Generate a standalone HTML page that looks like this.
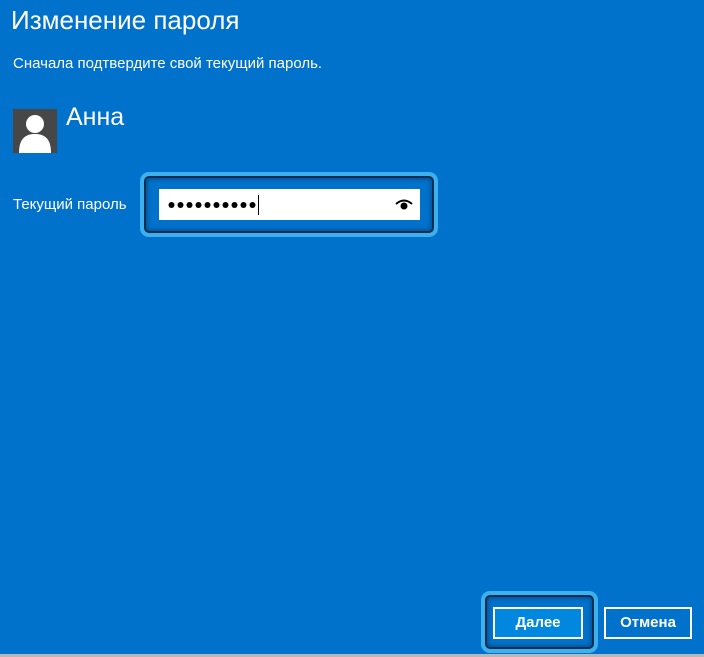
<!DOCTYPE html>
<html><head><meta charset="utf-8"><style>
body{margin:0;width:704px;height:657px;background:#0072cc;font-family:"Segoe UI","Liberation Sans","DejaVu Sans",sans-serif;color:#fff;position:relative;overflow:hidden}
.a{position:absolute}
.ring{position:absolute;border:4px solid #3fb0ee;border-radius:9px;box-shadow:inset 0 0 0 2px #0a2f52,inset 0 0 4px 3px #0a4a85}
.btn{position:absolute;border:2px solid #fff;font-weight:bold;font-size:15px;text-align:center;line-height:28px;box-sizing:border-box}
</style></head><body>
<div class="a" style="left:11px;top:5px;font-size:26px;font-weight:300;">Изменение пароля</div>
<div class="a" style="left:13px;top:55px;font-size:15px;">Сначала подтвердите свой текущий пароль.</div>
<div class="a" style="left:13px;top:109px;width:44px;height:44px;background:#474747;overflow:hidden">
<svg width="44" height="44" viewBox="0 0 44 44"><circle cx="22" cy="15" r="9" fill="#fff"/><path d="M6 44 C6 30 12 25 22 25 C32 25 38 30 38 44Z" fill="#fff"/></svg></div>
<div class="a" style="left:66px;top:103px;font-size:25px;font-weight:300;">Анна</div>
<div class="a" style="left:13px;top:196px;font-size:15px;">Текущий пароль</div>
<div class="ring" style="left:140px;top:172px;width:290px;height:57px"></div>
<div class="a" style="left:159px;top:189px;width:261px;height:31px;background:#fff"></div>
<svg class="a" style="left:168px;top:200px" width="92" height="10" viewBox="0 0 92 10" fill="#000">
<circle cx="3.5" cy="5" r="3"/><circle cx="12.5" cy="5" r="3"/><circle cx="21.5" cy="5" r="3"/><circle cx="30.5" cy="5" r="3"/><circle cx="39.5" cy="5" r="3"/><circle cx="48.5" cy="5" r="3"/><circle cx="57.5" cy="5" r="3"/><circle cx="66.5" cy="5" r="3"/><circle cx="75.5" cy="5" r="3"/><circle cx="84.5" cy="5" r="3"/></svg>
<div class="a" style="left:258px;top:195px;width:1px;height:20px;background:#000"></div>
<svg class="a" style="left:395px;top:198px" width="18" height="14" viewBox="0 0 18 14"><path d="M1 6 Q9 -1 17 6" stroke="#000" stroke-width="2" fill="none"/><circle cx="9" cy="8" r="3.5" fill="#000"/></svg>
<div class="ring" style="left:481px;top:591px;width:109px;height:54px"></div>
<div class="btn" style="left:493px;top:607px;width:90px;height:32px;background:#0088e0">Далее</div>
<div class="btn" style="left:604px;top:607px;width:88px;height:32px;background:#0072cc">Отмена</div>
<div class="a" style="left:0;top:654px;width:704px;height:3px;background:#b8b8b8"></div>
</body></html>
